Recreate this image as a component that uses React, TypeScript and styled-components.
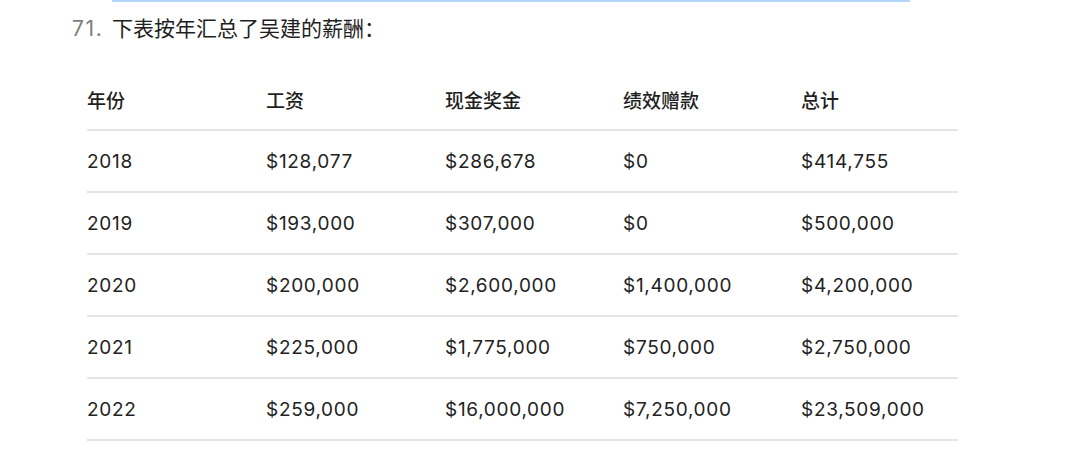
import React from "react";
import styled, { createGlobalStyle } from "styled-components";

const Global = createGlobalStyle`
  html, body { margin: 0; padding: 0; background: #fff; }
  body { font-family: Inter, "Noto Sans CJK SC", sans-serif; color: #1f1f1f; }
`;

const Page = styled.div`
  width: 1080px;
  height: 470px;
  overflow: hidden;
  display: flex;
  flex-direction: column;
  align-items: flex-start;
`;

const TopRule = styled.div`
  margin-left: 112px;
  width: 798px;
  height: 2px;
  background: #b3d7fb;
`;

const Item = styled.div`
  display: flex;
  align-items: baseline;
  margin-top: 14px;
  margin-left: 72px;
  font-size: 21px;
  line-height: 26px;
`;

const Marker = styled.span`
  color: #7d7d7d;
  width: 40px;
  font-size: 21px;
  letter-spacing: 1.6px;
`;

const Lead = styled.span`
  color: #1f1f1f;
`;

const Table = styled.table`
  margin-top: 28px;
  margin-left: 87px;
  border-collapse: collapse;
  table-layout: fixed;
  width: 871px;
  font-size: 19px;
`;

const Col = styled.col<{ $w: number }>`
  width: ${(p) => p.$w}px;
`;

const Th = styled.th`
  height: 59px;
  padding: 0;
  text-align: left;
  font-weight: 500;
  color: #1f1f1f;
  border-bottom: 2px solid #e6e6e6;
`;

const Td = styled.td`
  height: 59px;
  padding: 1px 0 0;
  text-align: left;
  font-weight: 400;
  color: #222;
  letter-spacing: 0.7px;
  border-bottom: 2px solid #e6e6e6;
`;

const headers = ["年份", "工资", "现金奖金", "绩效赠款", "总计"];
const rows = [
  ["2018", "$128,077", "$286,678", "$0", "$414,755"],
  ["2019", "$193,000", "$307,000", "$0", "$500,000"],
  ["2020", "$200,000", "$2,600,000", "$1,400,000", "$4,200,000"],
  ["2021", "$225,000", "$1,775,000", "$750,000", "$2,750,000"],
  ["2022", "$259,000", "$16,000,000", "$7,250,000", "$23,509,000"],
];
const widths = [179, 179, 178, 178, 157];

export default function App() {
  return (
    <Page>
      <Global />
      <TopRule />
      <Item>
        <Marker>71.</Marker>
        <Lead>下表按年汇总了吴建的薪酬：</Lead>
      </Item>
      <Table>
        <colgroup>
          {widths.map((w, i) => (
            <Col key={i} $w={w} />
          ))}
        </colgroup>
        <thead>
          <tr>
            {headers.map((h) => (
              <Th key={h}>{h}</Th>
            ))}
          </tr>
        </thead>
        <tbody>
          {rows.map((r) => (
            <tr key={r[0]}>
              {r.map((c, i) => (
                <Td key={i}>{c}</Td>
              ))}
            </tr>
          ))}
        </tbody>
      </Table>
    </Page>
  );
}
